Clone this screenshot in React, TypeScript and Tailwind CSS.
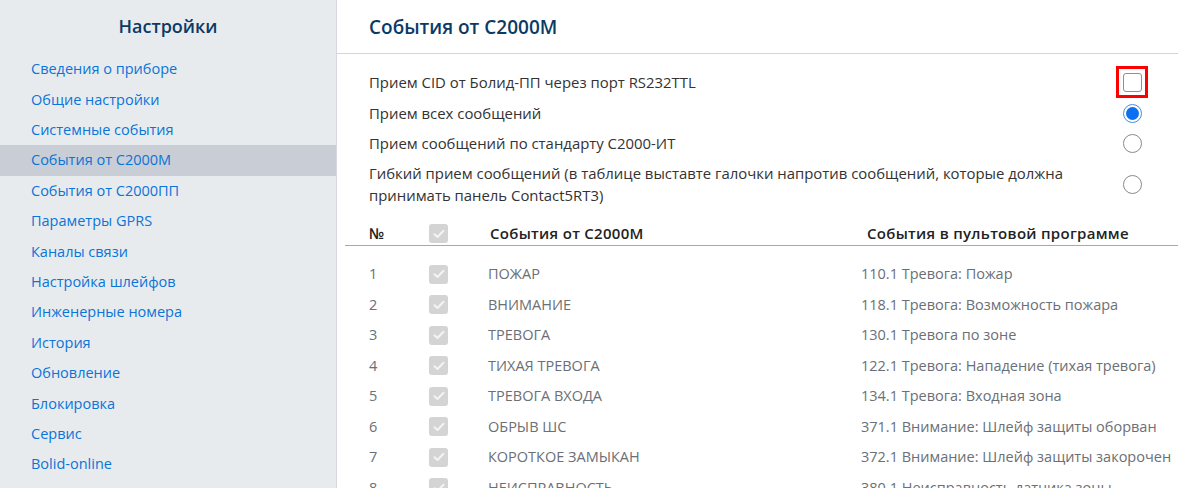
import React, { useState } from 'react';

const menuItems = [
  'Сведения о приборе',
  'Общие настройки',
  'Системные события',
  'События от С2000М',
  'События от С2000ПП',
  'Параметры GPRS',
  'Каналы связи',
  'Настройка шлейфов',
  'Инженерные номера',
  'История',
  'Обновление',
  'Блокировка',
  'Сервис',
  'Bolid-online',
];

const events = [
  ['ПОЖАР', '110.1 Тревога: Пожар'],
  ['ВНИМАНИЕ', '118.1 Тревога: Возможность пожара'],
  ['ТРЕВОГА', '130.1 Тревога по зоне'],
  ['ТИХАЯ ТРЕВОГА', '122.1 Тревога: Нападение (тихая тревога)'],
  ['ТРЕВОГА ВХОДА', '134.1 Тревога: Входная зона'],
  ['ОБРЫВ ШС', '371.1 Внимание: Шлейф защиты оборван'],
  ['КОРОТКОЕ ЗАМЫКАН', '372.1 Внимание: Шлейф защиты закорочен'],
  ['НЕИСПРАВНОСТЬ', '380.1 Неисправность датчика зоны'],
];

function DisabledCheck() {
  return (
    <span className="w-[19px] h-[19px] rounded-[3px] bg-[#d4d4d4] flex items-center justify-center">
      <svg width="12" height="10" viewBox="0 0 12 10" fill="none">
        <path d="M1.5 5.2 L4.5 8 L10.5 1.8" stroke="#f4f4f4" strokeWidth="2" strokeLinecap="round" strokeLinejoin="round" />
      </svg>
    </span>
  );
}

function Radio({ checked }: { checked: boolean }) {
  return checked ? (
    <span className="w-[19px] h-[19px] rounded-full border border-[#3d8ff0] flex items-center justify-center">
      <span className="w-[13px] h-[13px] rounded-full bg-[#0a6ff0]" />
    </span>
  ) : (
    <span className="w-[19px] h-[19px] rounded-full border border-[#8a8a8a] bg-white" />
  );
}

export default function App() {
  const [active] = useState(3);

  return (
    <div className="flex w-[1178px] h-[488px] overflow-hidden bg-white font-['Open_Sans',sans-serif] text-[14px]">
      {/* Sidebar */}
      <aside className="w-[337px] shrink-0 bg-[#e8ebee] border-r border-[#d5d9de]">
        <h1 className="h-[54px] pt-[13px] text-center text-[18px] font-semibold text-[#0b3a66]">Настройки</h1>
        <nav className="flex flex-col text-[14.5px]">
          {menuItems.map((item, i) => (
            <a
              key={item}
              className={`h-[30.4px] flex items-center pl-[31px] text-[#0a74d8] ${i === active ? 'bg-[#c9ced6]' : ''}`}
            >
              {item}
            </a>
          ))}
        </nav>
      </aside>

      {/* Content */}
      <main className="flex-1 min-w-0">
        <div className="h-[54px] border-b border-[#d3d5db] pl-[32px] pt-[13px] text-[19px] font-semibold text-[#0b3a66]">
          События от С2000М
        </div>

        <div className="pl-[32px] pr-[36px] pt-[12px] text-[14.9px] text-[#333]">
          <div className="flex items-center justify-between h-[32px]">
            <span>Прием CID от Болид-ПП через порт RS232TTL</span>
            <span className="w-[32px] h-[32px] border-[3px] border-[#ff0000] flex items-center justify-center -mr-[6px]">
              <span className="w-[19px] h-[19px] rounded-[3px] border border-[#8f8f8f] bg-white" />
            </span>
          </div>
          <div className="flex items-center justify-between h-[30px]">
            <span>Прием всех сообщений</span>
            <Radio checked />
          </div>
          <div className="flex items-center justify-between h-[30px]">
            <span>Прием сообщений по стандарту С2000-ИТ</span>
            <Radio checked={false} />
          </div>
          <div className="flex items-center justify-between pt-[4px]">
            <span className="w-[700px] leading-[22px]">
              Гибкий прием сообщений (в таблице выставте галочки напротив сообщений, которые должна принимать
              панель Contact5RT3)
            </span>
            <Radio checked={false} />
          </div>
        </div>

        {/* Event table */}
        <div className="ml-[8px] mt-[14px]">
          <div className="flex items-end h-[26px] pb-[1px] border-b border-[#7db4e6] text-[15px] font-semibold tracking-[0.3px] text-[#222]">
            <span className="w-[84px] pl-[24px]">№</span>
            <span className="w-[61px] pb-[1px]">
              <DisabledCheck />
            </span>
            <span className="w-[377px]">События от С2000М</span>
            <span>События в пультовой программе</span>
          </div>
          <div className="pt-[13px] text-[14.5px] text-[#6b6f76]">
            {events.map(([name, code], i) => (
              <div key={name} className="flex items-center h-[30.5px]">
                <span className="w-[84px] pl-[24px]">{i + 1}</span>
                <span className="w-[59px]">
                  <DisabledCheck />
                </span>
                <span className="w-[373px]">{name}</span>
                <span>{code}</span>
              </div>
            ))}
          </div>
        </div>
      </main>
    </div>
  );
}
